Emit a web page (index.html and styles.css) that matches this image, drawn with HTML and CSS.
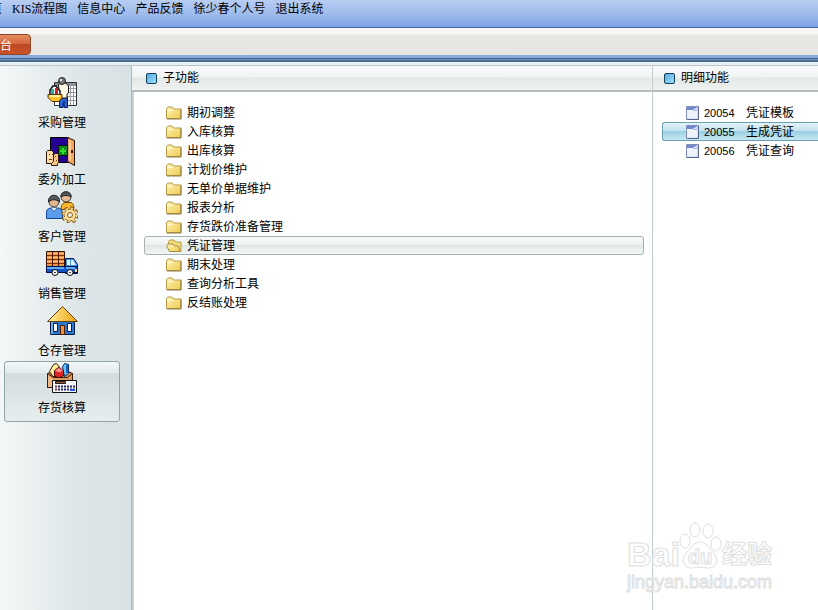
FILE: index.html
```html
<!DOCTYPE html>
<html lang="zh-CN">
  <head>
    <meta charset="UTF-8" />
    <meta name="viewport" content="width=device-width, initial-scale=1.0" />
    <title>存货核算</title>
    <link rel="stylesheet" href="styles.css">
  </head>
  <body>
    <svg class="sprite" aria-hidden="true">
      <defs>
        <linearGradient id="folder-fill" x1="0" y1="0" x2="1" y2="1">
          <stop offset="0" stop-color="#fff6b8" />
          <stop offset="1" stop-color="#efc94d" />
        </linearGradient>
        <linearGradient id="doc-fill" x1="0" y1="0" x2="1" y2="1">
          <stop offset="0" stop-color="#ffffff" />
          <stop offset="1" stop-color="#c9d5ef" />
        </linearGradient>
        <linearGradient id="roof-fill" x1="0" y1="0" x2="1" y2="0">
          <stop offset="0" stop-color="#fff0a0" />
          <stop offset="1" stop-color="#f0a010" />
        </linearGradient>
      </defs>
      <symbol id="folder" viewBox="0 0 16 14">
        <path d="M.5 12.500V2.500L2 1h4l1.500 2h7.500v9.500z" fill="url(#folder-fill)" stroke="#b59a4a" />
        <path d="M1.500 4.500h5l1-1" fill="none" stroke="#fffbe0" />
        <path d="M15 3.500v9.500H1" fill="none" stroke="#8d7a45" />
      </symbol>
      <symbol id="folder-open" viewBox="0 0 16 14">
        <path d="M2.500 9V2.500L4 1h4l1.500 2h5.500v9.500h-2z" fill="#f3dc7c" stroke="#b59a4a" />
        <path d="M.5 6.500L2 5h5l2 2h3l2.500 5.500h-11z" fill="url(#folder-fill)" stroke="#a08b45" />
      </symbol>
      <symbol id="doc" viewBox="0 0 13 14">
        <path d="M.5.500h12v13H.5z" fill="url(#doc-fill)" stroke="#8190b8" />
        <path d="M1 1h10L7 4H1z" fill="#7189cf" />
        <path d="M2 4h5l4-3v11H2z" fill="#eef2fb" />
        <path d="M7.500 4.500l3.500-3.500v3.500z" fill="#fff" stroke="#8fa2d8" stroke-width=".7" />
        <path d="M12.500 1v12.500H1" fill="none" stroke="#5a6790" />
      </symbol>
    </svg>

    <nav class="menu">
      <a class="menu__link" href="#">首页</a>
      <a class="menu__link" href="#">KIS流程图</a>
      <a class="menu__link" href="#">信息中心</a>
      <a class="menu__link" href="#">产品反馈</a>
      <a class="menu__link" href="#">徐少春个人号</a>
      <a class="menu__link" href="#">退出系统</a>
    </nav>
    <div class="tabs">
      <button class="tabs__item" type="button">工作台</button>
    </div>
    <div class="stripe"></div>

    <main class="main">
      <nav class="sidebar">
        <button class="module" type="button">
          <svg class="module__icon" viewBox="0 0 32 32">
            <path d="M8.500 5.500h22v23h-22z" fill="#fff" stroke="#333" />
            <path d="M9 6h21v3H9z" fill="#888c98" />
            <path d="M9 11.500h21M9 15.500h21M9 19.500h21M9 23.500h21M24.500 6v22M27.500 6v22" stroke="#9b9ba5" />
            <path d="M13.500 20h8v10.500h-3.500v-6l-1 6h-3.500z" fill="#2860cc" stroke="#061c60" />
            <path d="M12.500 7.500l2-1.500h5l3 3v7l-1.500 1v4h-8v-6z" fill="#fffbe6" stroke="#111" />
            <circle cx="16" cy="4" r="3.500" fill="#777" stroke="#222" />
            <path d="M14 2h2v2h-2z" fill="#e8e8e8" />
            <path d="M4 17v-4l3-4h3l4 5v4" fill="#fff" stroke="#111" stroke-width="1.500" />
            <path d="M5 12h3v6H5z" fill="#28b0a0" />
            <path d="M9 11h3v7H9z" fill="#d32020" />
            <path d="M2 17.500h14v3l-3 4H6l-4-4z" fill="#ffc22c" stroke="#5b3104" />
            <path d="M4 18h10v2H4z" fill="#fff0a0" />
          </svg>
          <span>采购管理</span>
        </button>
        <button class="module" type="button">
          <svg class="module__icon" viewBox="0 0 32 32">
            <path d="M4.500 3.500h18v25h-18z" fill="#250094" stroke="#000" />
            <path d="M12.500 11.500h9v10h-9z" fill="#0c8b20" stroke="#001800" />
            <path d="M16 14h2v2h2v2h-2v2h-2v-2h-2v-2h2z" fill="#35de28" />
            <path d="M21.500 3.500l7 3v25l-7-4z" fill="#f6a55c" stroke="#28120a" />
            <path d="M23 6l2 1v20l-2-1z" fill="#ffd2a0" />
            <path d="M25 16h2v3h-2z" fill="#3d1d00" />
            <path d="M.5 17.500l1-1h4l2 1.500v8l2 2v1.500h-9z" fill="#ffdba6" stroke="#2b1608" />
            <path d="M7.500 20.500l2-1h3v9l-1 1v2H5.500v-2l2-2z" fill="#f8c888" stroke="#2b1608" />
            <path d="M3 20h1v1H3zM6 20h1v1H6zM3 25h3v1H3zM9 22h1v1H9zM10 26h1v1h-1z" fill="#6a3514" />
          </svg>
          <span>委外加工</span>
        </button>
        <button class="module" type="button">
          <svg class="module__icon" viewBox="0 0 32 32">
            <path d="M15 18.500c0-5 2-7 5-7h4c3 0 4 3 4 7z" fill="#f8b72e" stroke="#774600" />
            <circle cx="20" cy="6" r="5" fill="#e4b994" stroke="#353535" />
            <path d="M15 6c-1-7 11-7 10 0-3-2-7-2-10 0z" fill="#54585b" stroke="#202224" />
            <path d="M.5 27.500V21c0-3 3-4 5-4h6c3 0 5 2 5 5v5.500z" fill="#5a9ded" stroke="#12458f" />
            <path d="M5 17l3 4 3-4" fill="#d6eaff" stroke="#356dac" />
            <circle cx="8" cy="11" r="5" fill="#e2b58f" stroke="#393939" />
            <path d="M2.500 11c-1-9 12-9 11 0-3-3-8-3-11 0z" fill="#53595d" stroke="#202427" />
            <circle cx="24" cy="24" r="7" fill="none" stroke="#8d5b13" stroke-width="3.500" stroke-dasharray="3 2.500" />
            <circle cx="24" cy="24" r="6" fill="#ffe09a" stroke="#8d5b13" />
            <circle cx="24" cy="24" r="6.500" fill="none" stroke="#ffe09a" stroke-width="2" stroke-dasharray="2 3.100" />
            <circle cx="24" cy="24" r="2.500" fill="#e8f0ee" stroke="#8d5b13" />
          </svg>
          <span>客户管理</span>
        </button>
        <button class="module" type="button">
          <svg class="module__icon" viewBox="0 0 32 32">
            <path d="M.5 3.500h18v15H.5z" fill="#ed9549" stroke="#351000" />
            <path d="M1 7.500h17M1 11.500h17M1 15.500h17" stroke="#8e2f09" />
            <path d="M1 5.500h17M1 9.500h17M1 13.500h17" stroke="#ffc27a" />
            <path d="M6.500 4v14M12.500 4v14" stroke="#481500" />
            <path d="M19.500 10.500h8l4 6v9h-12z" fill="#3e91ed" stroke="#051b55" />
            <path d="M21 12h3v5h-3zM25 12h2l3 5h-5z" fill="#e1f7ff" />
            <path d="M.5 18.500h31v6H.5z" fill="#1751c6" stroke="#000e47" />
            <path d="M1 19h17v2H1zM20 19h9v2h-9z" fill="#5cafff" />
            <path d="M29 21h2v3h-2z" fill="#ffe38a" />
            <circle cx="9" cy="24.500" r="3" fill="#f8f8f8" stroke="#111" />
            <circle cx="24" cy="24.500" r="3" fill="#f8f8f8" stroke="#111" />
            <path d="M8 24h2v1H8zM23 24h2v1h-2z" fill="#444" />
          </svg>
          <span>销售管理</span>
        </button>
        <button class="module" type="button">
          <svg class="module__icon" viewBox="0 0 32 32">
            <path d="M4.500 15.500h24v14h-24z" fill="#2878cc" stroke="#071c48" />
            <path d="M5 17h2v12H5z" fill="#65afee" />
            <path d="M7.500 18.500h4v8h-4zM21.500 18.500h4v8h-4z" fill="#fff" stroke="#061d54" />
            <path d="M14.500 20.500h4v9h-4z" fill="#e99343" stroke="#502000" />
            <path d="M16.500 1.500l15 15h-30z" fill="url(#roof-fill)" stroke="#69420a" />
          </svg>
          <span>仓存管理</span>
        </button>
        <button class="module module--active" type="button">
          <svg class="module__icon" viewBox="0 0 32 32">
            <path d="M1.500 11.500l7-3h12l6 3v14h-25z" fill="#d58a4d" stroke="#401b09" />
            <path d="M3.500 9.500l4-7 3-1 4 5-3 8H7z" fill="#fff19b" stroke="#302000" />
            <path d="M16.500 5l2-3.500 4 1v9l-4 3z" fill="#69c7ff" stroke="#082c68" />
            <path d="M20 3h2v8h-2z" fill="#1765c5" />
            <path d="M8.500 8.500l4-3 5 3v5l-5 3-4-3z" fill="#dc2424" stroke="#490000" />
            <path d="M9 8.500l4 2 4-2-4-2.500z" fill="#ff9292" />
            <path d="M1.500 11.500l6 4h14l5-4v14h-25z" fill="#dc9a60" stroke="#401b09" />
            <path d="M2 13l5 4v8H2z" fill="#f0b98a" />
            <path d="M6.500 18.500h24v12h-24z" fill="#f5f6f9" stroke="#111" />
            <path d="M9.500 19.500h10v2h-10z" fill="#a05a24" stroke="#222" />
            <path d="M9 24.500h20M9 27.500h20" stroke="#26265e" stroke-width="2" stroke-dasharray="2 1" />
            <path d="M9 24h2v1H9zM9 27h2v1H9z" fill="#df2525" />
            <path d="M24 27h5v2h-5z" fill="#2452f0" />
          </svg>
          <span>存货核算</span>
        </button>
      </nav>

      <section class="panel panel--sub">
        <h2 class="panel__title">子功能</h2>
        <ul class="list">
          <li><button class="row" type="button"><svg class="row__folder"><use href="#folder" /></svg>期初调整</button></li>
          <li><button class="row" type="button"><svg class="row__folder"><use href="#folder" /></svg>入库核算</button></li>
          <li><button class="row" type="button"><svg class="row__folder"><use href="#folder" /></svg>出库核算</button></li>
          <li><button class="row" type="button"><svg class="row__folder"><use href="#folder" /></svg>计划价维护</button></li>
          <li><button class="row" type="button"><svg class="row__folder"><use href="#folder" /></svg>无单价单据维护</button></li>
          <li><button class="row" type="button"><svg class="row__folder"><use href="#folder" /></svg>报表分析</button></li>
          <li><button class="row" type="button"><svg class="row__folder"><use href="#folder" /></svg>存货跌价准备管理</button></li>
          <li><button class="row row--active" type="button"><svg class="row__folder"><use href="#folder-open" /></svg>凭证管理</button></li>
          <li><button class="row" type="button"><svg class="row__folder"><use href="#folder" /></svg>期末处理</button></li>
          <li><button class="row" type="button"><svg class="row__folder"><use href="#folder" /></svg>查询分析工具</button></li>
          <li><button class="row" type="button"><svg class="row__folder"><use href="#folder" /></svg>反结账处理</button></li>
        </ul>
      </section>

      <section class="panel panel--detail">
        <h2 class="panel__title">明细功能</h2>
        <ul class="list">
          <li><button class="row" type="button"><svg class="row__doc"><use href="#doc" /></svg><span class="row__code">20054</span>凭证模板</button></li>
          <li><button class="row row--current" type="button"><svg class="row__doc"><use href="#doc" /></svg><span class="row__code">20055</span>生成凭证</button></li>
          <li><button class="row" type="button"><svg class="row__doc"><use href="#doc" /></svg><span class="row__code">20056</span>凭证查询</button></li>
        </ul>
      </section>
    </main>

    <div class="watermark">
      <div class="watermark__logo">
        <span class="watermark__name">Bai</span>
        <span class="watermark__paw">
          <svg class="watermark__shape" viewBox="0 0 44 48">
            <ellipse cx="7" cy="19" rx="5" ry="7" />
            <ellipse cx="17" cy="8" rx="5" ry="7" />
            <ellipse cx="30" cy="9" rx="5" ry="7" />
            <ellipse cx="38" cy="22" rx="5" ry="7" />
            <path d="M22 20c6 0 8 5 12 9 9 9 4 18-5 17-5-1-9-1-14 0-9 1-14-8-5-17 4-4 6-9 12-9z" />
          </svg>
          <span class="watermark__du">du</span>
        </span>
        <span class="watermark__cn">经验</span>
      </div>
      <div class="watermark__url">jingyan.baidu.com</div>
    </div>
  </body>
</html>
```
FILE: styles.css
```css
* {
  box-sizing: border-box;
}
body {
  margin: 0;
  min-height: 100vh;
  display: flex;
  flex-direction: column;
  overflow: hidden;
  background-color: #fff;
  color: #000;
  font-family: "Liberation Sans", "Noto Sans CJK SC", sans-serif;
  font-size: 12px;
  line-height: 16px;
}
button {
  border: 1px solid transparent;
  background: none;
  color: inherit;
  font: inherit;
  padding: 0;
  cursor: pointer;
}
.sprite {
  position: absolute;
  width: 0;
  height: 0;
}

/* top menu, scrolled left so the first entry is cut off */
.menu {
  height: 28px;
  display: flex;
  gap: 10px;
  margin-left: -22px;
  padding-top: 1px;
  background: linear-gradient(#b8cdf2, #9fbcec 50%, #7ea3e2);
  border-bottom: 1px solid #3f66a8;
  font-family: "Liberation Serif", "Noto Sans CJK SC", serif;
}
.menu__link {
  color: #000;
  text-decoration: none;
  white-space: nowrap;
}
.tabs {
  height: 27px;
  display: flex;
  align-items: flex-end;
  background: linear-gradient(#f7f6f5 6px, #e9e7e4 7px, #e8e6e3);
}
.tabs__item {
  width: 56px;
  height: 21px;
  margin-left: -25px;
  padding-top: 2px;
  border: 1px solid #8f4426;
  border-radius: 4px;
  background: linear-gradient(#e58b60, #d4683f 45%, #be4820 50%, #c9542b);
  color: #fff;
  text-align: left;
}
.stripe {
  height: 11px;
  background: linear-gradient(#89abda 3px, #3f618f 3px 4px, #7894b9 4px 5px, #496b94 5px 7px, #e5eff4 7px 10px, #bcc7cb 10px);
}

.main {
  flex: 1;
  display: grid;
  grid-template-columns: 132px 1fr 165px;
}
.sidebar {
  display: flex;
  flex-direction: column;
  padding: 10px 11px 0 4px;
  border-right: 1px solid #aab7ba;
  background: linear-gradient(90deg, #f4f7f7, #dce5e7 65%, #d9e3e5);
}
.module {
  height: 61px;
  margin-bottom: -4px;
  display: flex;
  flex-direction: column;
  align-items: center;
  border-radius: 3px;
}
.module--active {
  border-color: #94a5a8;
  background: linear-gradient(#f3f7f7, #e4ebec 18%, #d3dddf 20%, #e6eded);
}
.module__icon {
  width: 32px;
  height: 32px;
  margin-bottom: 6px;
}

.panel__title {
  height: 26px;
  margin: 0;
  padding-left: 14px;
  display: flex;
  align-items: center;
  gap: 6px;
  border-bottom: 2px solid #b4bcbc;
  background: linear-gradient(#f8fafa, #f0f4f3 45%, #e3e9e7 50%, #eef2f0);
  font-size: 12px;
  font-weight: 400;
}
.panel__title::before {
  content: "";
  width: 9px;
  height: 9px;
  border: 1px solid #123c5c;
  border-radius: 2px;
  background: linear-gradient(135deg, #58a9e0, #9be2fa);
}
.panel--sub {
  border-right: 1px solid #c3cdd0;
  box-shadow: inset 2px 0 #c9d1d4;
}
.panel--detail .panel__title {
  padding-left: 11px;
}
.list {
  margin: 0;
  padding: 11px 8px 0 12px;
  list-style: none;
}
.panel--detail .list {
  padding: 11px 0 0 9px;
}
.row {
  width: 100%;
  height: 19px;
  padding-left: 21px;
  display: flex;
  align-items: center;
  border-radius: 3px;
  white-space: nowrap;
}
.panel--detail .row {
  padding-left: 23px;
}
.row--active {
  border-color: #a3b1b3;
  background: linear-gradient(#f8faf9, #edf2f0 45%, #e0e8e5 50%, #f2f6f4);
}
.row--current {
  border-color: #6d9fb2;
  border-right: 0;
  border-radius: 3px 0 0 3px;
  background: linear-gradient(#e3f3f9, #c2e3ef 45%, #9cd0e2 50%, #c4e8f2);
}
.row__folder {
  width: 16px;
  height: 14px;
  margin-right: 5px;
}
.row__doc {
  width: 13px;
  height: 14px;
  margin-right: 5px;
}
.row__code {
  width: 42px;
  font-size: 11px;
  text-align: left;
}

/* outline-only mark over the lower right corner */
.watermark {
  position: absolute;
  right: 43px;
  bottom: 18px;
  width: 148px;
  color: transparent;
  font-weight: 700;
  pointer-events: none;
  -webkit-text-stroke: 1px #dedede;
}
.watermark__logo {
  height: 50px;
  display: flex;
  align-items: flex-end;
  line-height: 36px;
}
.watermark__name {
  width: 51px;
  font-size: 34px;
}
.watermark__paw {
  width: 44px;
  height: 50px;
  display: grid;
}
.watermark__shape {
  grid-area: 1 / 1;
  width: 44px;
  height: 48px;
  fill: none;
  stroke: #dedede;
}
.watermark__du {
  grid-area: 1 / 1;
  align-self: end;
  text-align: center;
  font-size: 20px;
  line-height: 30px;
}
.watermark__cn {
  font-size: 25px;
}
.watermark__url {
  font-size: 18px;
  line-height: 20px;
  font-weight: 400;
}
```
